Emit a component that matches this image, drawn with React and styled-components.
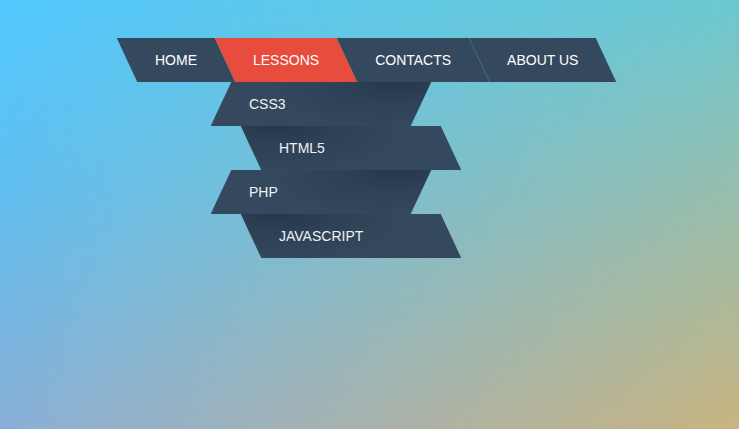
import React from 'react';
import styled, { createGlobalStyle } from 'styled-components';

const Global = createGlobalStyle`
  html, body { margin: 0; padding: 0; }
  body { font-family: "Liberation Sans", Arial, sans-serif; }
`;

const Page = styled.div`
  position: relative;
  min-height: 100vh;
  box-sizing: border-box;
  overflow: hidden;
  padding: 38px 0 0 127px;
  background: linear-gradient(to bottom, #52c8fe 0%, #62bff0 45%, #8ab0d8 100%);
  &::before {
    content: '';
    position: absolute;
    inset: 0;
    background: linear-gradient(to bottom, #6cc8d0 0%, #9cbca8 50%, #c8b480 100%);
    -webkit-mask-image: linear-gradient(to right, transparent, #000);
    mask-image: linear-gradient(to right, transparent, #000);
  }
`;

const Nav = styled.ul`
  position: relative;
  z-index: 1;
  display: flex;
  margin: 0;
  padding: 0;
  list-style: none;
`;

const NavItem = styled.li`
  position: relative;
  z-index: 0;
  height: 44px;
  line-height: 44px;
  padding: 0 28px;
  color: #fff;
  font-size: 14px;
  text-transform: uppercase;
  white-space: nowrap;
  &::before {
    content: '';
    position: absolute;
    inset: 0;
    z-index: -1;
    box-sizing: border-box;
    background: ${p => (p.$active ? '#e74c3c' : '#34495e')};
    border-left: ${p => (p.$divider ? '1px solid #42647c' : 'none')};
    transform: skewX(25deg);
  }
`;

const Dropdown = styled.ul`
  position: absolute;
  top: 100%;
  left: -4px;
  margin: 0;
  padding: 0;
  list-style: none;
  z-index: 2;
`;

const SubItem = styled.li`
  position: relative;
  z-index: 0;
  width: 200px;
  box-sizing: border-box;
  height: 44px;
  line-height: 44px;
  padding-left: 28px;
  margin-left: ${p => (p.$even ? '30px' : '0')};
  color: #eef2f4;
  font-size: 14px;
  text-transform: uppercase;
  white-space: nowrap;
  &::before {
    content: '';
    position: absolute;
    inset: 0;
    z-index: -1;
    background: ${p =>
      p.$even
        ? 'radial-gradient(130px 46px at 18% 0%, #27374a 0%, #2e4156 45%, #34495e 100%)'
        : 'radial-gradient(130px 46px at 84% 0%, #27374a 0%, #2e4156 45%, #34495e 100%)'};
    transform: skewX(${p => (p.$even ? '25deg' : '-25deg')});
  }
`;

const items = ['Home', 'Lessons', 'Contacts', 'About us'];
const sub = ['CSS3', 'HTML5', 'PHP', 'JavaScript'];

export default function App() {
  return (
    <>
      <Global />
      <Page>
        <Nav>
          {items.map((it, i) => (
            <NavItem key={it} $active={i === 1} $divider={i === 3}>
              {it}
              {i === 1 && (
                <Dropdown>
                  {sub.map((s, j) => (
                    <SubItem key={s} $even={j % 2 === 1}>
                      {s}
                    </SubItem>
                  ))}
                </Dropdown>
              )}
            </NavItem>
          ))}
        </Nav>
      </Page>
    </>
  );
}
